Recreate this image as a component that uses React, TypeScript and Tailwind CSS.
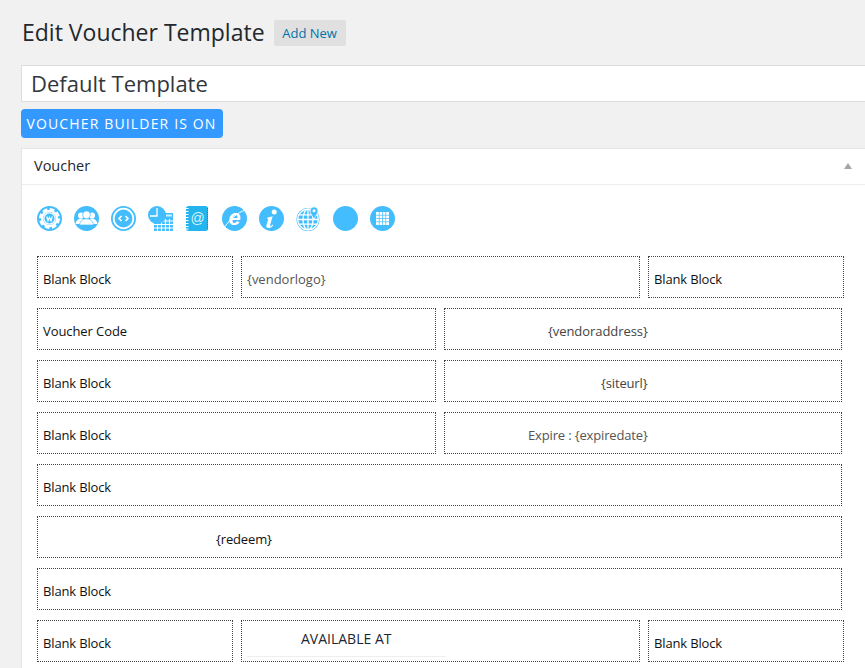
const C = "#43bdfe";

function Ic({ children }: { children?: React.ReactNode }) {
  return (
    <svg width="25" height="25" viewBox="0 0 25 25" className="block shrink-0">
      {children}
    </svg>
  );
}

const icons = [
  <Ic key="1">
    <circle cx="12.5" cy="12.5" r="12.5" fill={C} />
    <circle cx="12.5" cy="12.5" r="7.6" fill="none" stroke="#fff" strokeWidth="2.2" />
    <circle cx="12.5" cy="12.5" r="9" fill="none" stroke="#fff" strokeWidth="3" strokeDasharray="4.6 2.47" />
    <circle cx="12.5" cy="12.5" r="6.2" fill="#fff" />
    <circle cx="12.5" cy="12.5" r="5" fill={C} />
    <path d="M9.8 10.5l1.2 4.2 1.5-3.200 1.500 3.200 1.200-4.200" fill="none" stroke="#fff" strokeWidth="1.200" />
  </Ic>,
  <Ic key="2">
    <circle cx="12.5" cy="12.5" r="12.5" fill={C} />
    <circle cx="7" cy="9.500" r="3" fill="#fff" />
    <circle cx="18" cy="9.500" r="3" fill="#fff" />
    <path d="M1.500 17.500c1-3.500 3.200-5 5.500-5s3.500 1 4.500 2.500v3H2z" fill="#fff" />
    <path d="M23.500 17.500c-1-3.500-3.200-5-5.500-5s-3.500 1-4.500 2.500v3H23z" fill="#fff" />
    <circle cx="12.500" cy="8.800" r="3.900" fill="#fff" stroke={C} strokeWidth=".7" />
    <path d="M5.500 19c.7-4.500 3.500-6.200 7-6.200s6.300 1.700 7 6.200z" fill="#fff" stroke={C} strokeWidth=".7" />
  </Ic>,
  <Ic key="3">
    <circle cx="12.500" cy="12.500" r="12.500" fill={C} />
    <circle cx="12.500" cy="12.500" r="9.800" fill="none" stroke="#fff" strokeWidth="1.800" />
    <path d="M10.500 10l-2.500 2.500 2.500 2.500M14.500 10l2.500 2.500-2.500 2.500" fill="none" stroke="#fff" strokeWidth="1.600" />
  </Ic>,
  <Ic key="4">
    <rect x="6" y="7" width="19" height="18" fill={C} />
    <path d="M9.500 13v12M13.500 13v12M17.500 13v12M21.500 13v12M6 15h19M6 18.500h19M6 22h19" stroke="#fff" strokeWidth="1.100" />
    <rect x="18" y="8.500" width="6" height="2" fill="#fff" opacity=".75" />
    <circle cx="9" cy="9" r="9" fill={C} />
    <path d="M9 2v8H2" fill="none" stroke="#fff" strokeWidth="1.300" />
  </Ic>,
  <Ic key="5">
    <rect x="1" y="0" width="22" height="25" rx="2.500" fill="#25b5ee" />
    <path d="M0 2.500h3.500M0 5.500h3.500M0 8.500h3.500M0 11.500h3.500M0 14.500h3.500M0 17.500h3.500M0 20.500h3.500M0 23h3.500" stroke="#fff" strokeWidth="1" />
    <path d="M22.500 2v21" stroke="#1b7fb0" strokeWidth="1" strokeDasharray="1 1" />
    <text x="12.500" y="16.500" textAnchor="middle" fill="#d9f3ff" fontSize="14" fontFamily="Liberation Sans, sans-serif">@</text>
  </Ic>,
  <Ic key="6">
    <circle cx="12.500" cy="12.500" r="12.500" fill={C} />
    <text x="12.500" y="19" textAnchor="middle" fill="#fff" fontSize="22" fontWeight="700" fontStyle="italic" fontFamily="Liberation Sans, sans-serif">e</text>
    <path d="M3 20.500C7 15 15 6 24 4" fill="none" stroke="#fff" strokeWidth="1" />
  </Ic>,
  <Ic key="7">
    <circle cx="12.500" cy="12.500" r="12.500" fill={C} />
    <circle cx="15.200" cy="6" r="2.500" fill="#fff" />
    <path d="M8.500 11.500l5.200-1.300-2.700 9.400c-.2.800.5 1 1 .5l1.700-1.500.6.600c-1.500 1.900-3.200 2.900-4.800 2.900-2 0-2.500-1.200-2.100-2.800l1.900-6.200-1.200-.4z" fill="#fff" />
  </Ic>,
  <Ic key="8">
    <circle cx="12" cy="13.500" r="11.500" fill={C} />
    <circle cx="12" cy="13.500" r="10.300" fill="none" stroke="#fff" strokeWidth="1.200" />
    <ellipse cx="12" cy="13.500" rx="5" ry="10.300" fill="none" stroke="#fff" strokeWidth="1.300" />
    <path d="M12 3.200v20.600M1.700 13.500h20.600M3 8.800h18M3 18.200h18" stroke="#fff" strokeWidth="1.300" />
    <path d="M18 13c-2.200-3.800-4-5.700-4-8.200a4 4 0 018 0c0 2.500-1.800 4.400-4 8.200z" fill={C} stroke="#fff" strokeWidth=".8" />
    <circle cx="18" cy="4.800" r="1.500" fill="#fff" />
  </Ic>,
  <Ic key="9">
    <circle cx="12.500" cy="12.500" r="12.500" fill={C} />
  </Ic>,
  <Ic key="10">
    <circle cx="12.500" cy="12.500" r="12.500" fill={C} />
    <path d="M6 6h13v13H6z" fill="#fff" />
    <path d="M9.250 6v13M12.500 6v13M15.750 6v13M6 9.250h13M6 12.500h13M6 15.750h13" stroke={C} strokeWidth=".7" />
  </Ic>,
];

function Block({ w, children, className = "", track = "tracking-[-0.15px]" }: { w: string; children?: React.ReactNode; className?: string; track?: string }) {
  return (
    <div className={`${w} h-[42px] shrink-0 border border-dotted border-[#444] pl-[5px] pt-[13px] text-[13px] leading-[18px] text-[#111] ${track} ${className}`}>
      {children}
    </div>
  );
}

export default function App() {
  return (
    <div className="h-[668px] w-[865px] overflow-hidden bg-[#f1f1f1] font-['Open_Sans','Noto_Sans',sans-serif] text-[#23282d]">
      <div className="flex h-[65px] items-start pl-[22px] pt-[16px]">
        <h1 className="text-[23px] leading-[32px] font-normal">Edit Voucher Template</h1>
        <span className="ml-[9px] mt-[4px] flex h-[26px] w-[72px] items-center justify-center rounded-[2px] bg-[#e0e0e0] pt-[1px] text-[13px] text-[#0073aa]">
          Add New
        </span>
      </div>
      <div className="ml-[21px] flex h-[37px] w-[900px] items-center border border-[#dddddd] bg-white pl-[9px] text-[22px] text-[#32373c]">
        Default Template
      </div>
      <div className="ml-[21px] mt-[7px] flex h-[29px] w-[202px] items-center justify-center rounded-[4px] bg-[#3399ff] pr-[1px] text-[14px] tracking-[1.15px] text-white">
        VOUCHER BUILDER IS ON
      </div>
      <div className="ml-[21px] mt-[10px] h-[600px] w-[900px] border border-[#e5e5e5] bg-white">
        <div className="flex h-[36px] w-[843px] items-center justify-between border-b border-[#eeeeee] pb-[1px] pl-[12px] pr-[13px] text-[14.5px] text-[#23282d]">
          <span>Voucher</span>
          <span className="h-0 w-0 border-x-[4px] border-b-[6px] border-x-transparent border-b-[#a5a5a5]" />
        </div>
        <div className="pl-[15px] pt-[21px]">
          <div className="flex h-[25px] gap-[12px]">{icons}</div>
          <div className="mt-[25px] flex flex-col gap-[10px]">
            <div className="flex gap-[8px]">
              <Block w="w-[196px]">Blank Block</Block>
              <Block w="w-[399px]" track="tracking-normal" className="text-[#555]">{"{vendorlogo}"}</Block>
              <Block w="w-[196px]">Blank Block</Block>
            </div>
            <div className="flex gap-[8px]">
              <Block w="w-[399px]" track="tracking-[-0.08px]">Voucher Code</Block>
              <Block w="w-[398px]" track="tracking-[-0.07px]" className="pl-[103px] text-[#444]">{"{vendoraddress}"}</Block>
            </div>
            <div className="flex gap-[8px]">
              <Block w="w-[399px]">Blank Block</Block>
              <Block w="w-[398px]" className="pl-[156px] text-[#444]">{"{siteurl}"}</Block>
            </div>
            <div className="flex gap-[8px]">
              <Block w="w-[399px]">Blank Block</Block>
              <Block w="w-[398px]" className="pl-[83px] text-[#555]">{"Expire : {expiredate}"}</Block>
            </div>
            <Block w="w-[805px]">Blank Block</Block>
            <Block w="w-[805px]" className="pl-[178px] pt-[12px]">{"{redeem}"}</Block>
            <Block w="w-[805px]">Blank Block</Block>
            <div className="flex gap-[8px]">
              <Block w="w-[196px]">Blank Block</Block>
              <div className="h-[42px] w-[399px] shrink-0 border border-dotted border-[#444] pl-[5px]">
                <div className="h-[36px] w-[199px] border-b border-[#eeeeee] pl-[54px] pt-[8px] text-[14px] leading-[20px] text-[#1c2733]">
                  AVAILABLE AT
                </div>
              </div>
              <Block w="w-[196px]">Blank Block</Block>
            </div>
          </div>
        </div>
      </div>
    </div>
  );
}
